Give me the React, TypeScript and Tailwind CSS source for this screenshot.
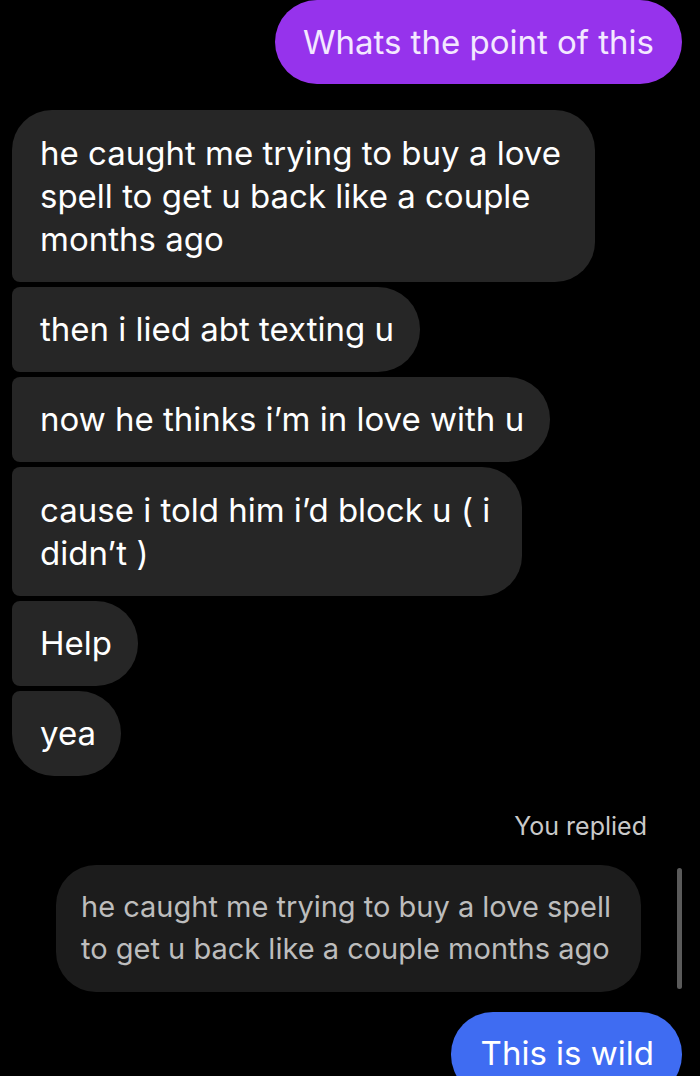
import React from "react";

const font = { fontFamily: "Inter, 'Liberation Sans', sans-serif" };

export default function App() {
  return (
    <div
      className="w-[700px] h-[1076px] overflow-hidden bg-black text-white flex flex-col pl-[12px] pr-[18px]"
      style={font}
    >
      {/* my message at top */}
      <div className="shrink-0 self-end h-[84px] flex items-center px-[28px] rounded-[42px] bg-[#9633ec] text-[33px] text-[#f3e8ff] leading-none whitespace-nowrap">
        Whats the point of this
      </div>

      {/* their messages, grouped */}
      <div className="shrink-0 mt-[26px] flex flex-col gap-[5px] items-start text-[33px] whitespace-nowrap">
        <div className="w-[583px] px-[28px] py-[21.5px] leading-[43px] bg-[#262626] rounded-tl-[40px] rounded-r-[40px] rounded-bl-[8px]">
          he caught me trying to buy a love
          <br />
          spell to get u back like a couple
          <br />
          months ago
        </div>
        <div className="h-[85px] flex items-center pl-[28px] pr-[26px] bg-[#262626] rounded-l-[8px] rounded-r-[42px]">
          then i lied abt texting u
        </div>
        <div className="h-[85px] flex items-center pl-[28px] pr-[26px] bg-[#262626] rounded-l-[8px] rounded-r-[42px]">
          now he thinks i’m in love with u
        </div>
        <div className="w-[510px] px-[28px] py-[21.5px] leading-[43px] bg-[#262626] rounded-l-[8px] rounded-r-[40px]">
          cause i told him i’d block u ( i
          <br />
          didn’t )
        </div>
        <div className="h-[85px] flex items-center pl-[28px] pr-[26px] bg-[#262626] rounded-l-[8px] rounded-r-[42px]">
          Help
        </div>
        <div className="h-[85px] flex items-center pl-[28px] pr-[25px] bg-[#262626] rounded-tl-[8px] rounded-bl-[42px] rounded-r-[42px]">
          yea
        </div>
      </div>

      {/* reply block */}
      <div className="shrink-0 mt-[32px] self-end pr-[35px] text-[25px] text-[#c9c9c9]">You replied</div>
      <div className="shrink-0 mt-[19px] flex items-stretch gap-[36px] self-end">
        <div className="w-[585px] px-[25px] py-[21.5px] text-[29px] leading-[42px] text-[#bdbdbd] bg-[#1c1c1c] rounded-[40px] whitespace-nowrap">
          he caught me trying to buy a love spell
          <br />
          to get u back like a couple months ago
        </div>
        <div className="w-[5px] my-[3px] rounded-full bg-[#5a5a5a]" />
      </div>

      <div className="shrink-0 mt-[20px] self-end h-[85px] flex items-center pl-[30px] pr-[28px] rounded-[42px] bg-[#3f6cf2] text-[33px] whitespace-nowrap">
        This is wild
      </div>
    </div>
  );
}
